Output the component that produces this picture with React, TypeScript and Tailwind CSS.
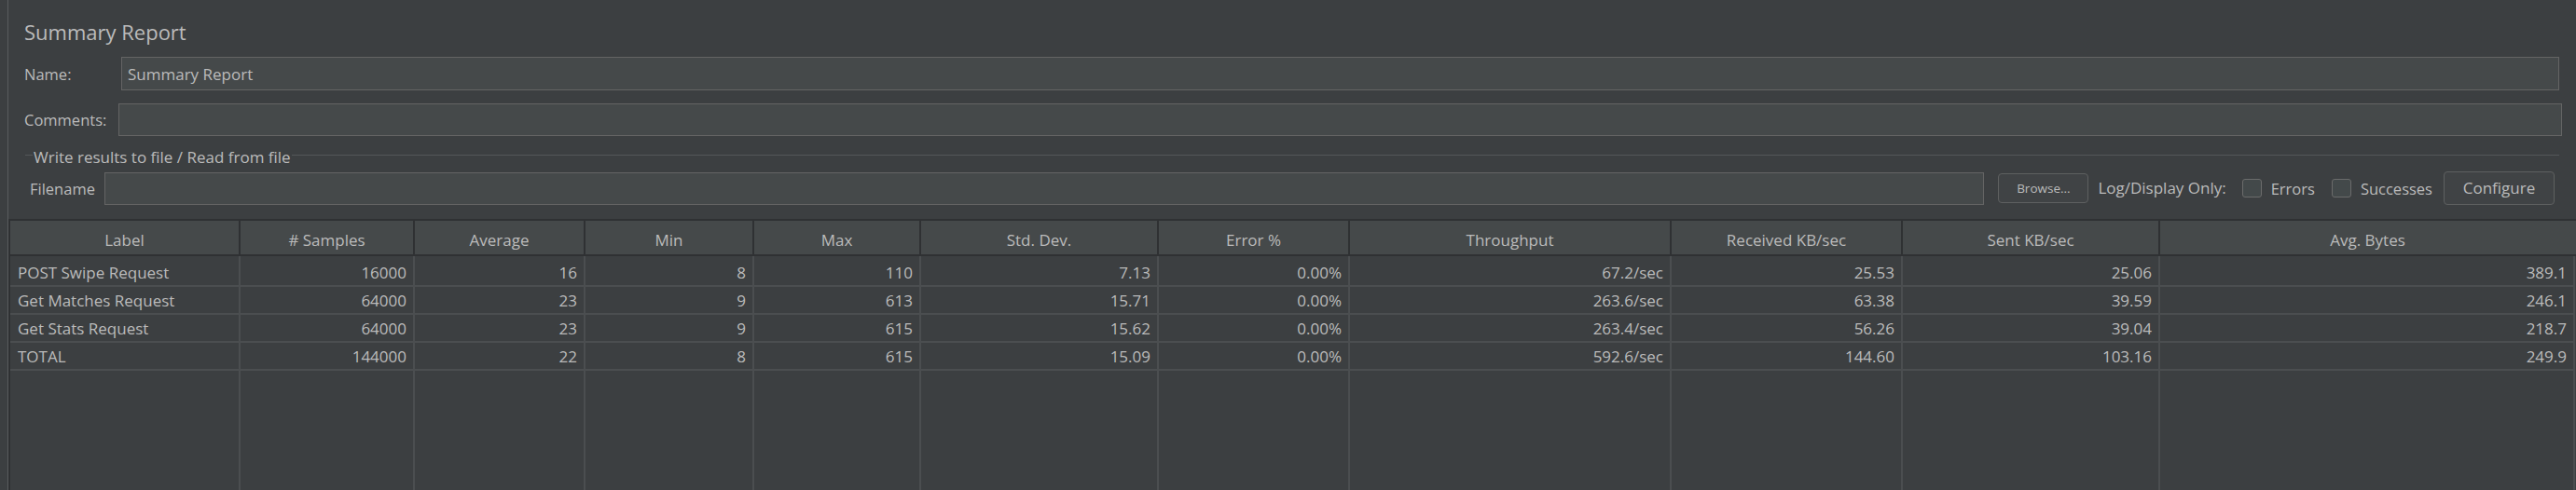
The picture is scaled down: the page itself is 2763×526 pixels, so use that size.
import React from 'react';

type Row = string[];

const columns = [
  'Label',
  '# Samples',
  'Average',
  'Min',
  'Max',
  'Std. Dev.',
  'Error %',
  'Throughput',
  'Received KB/sec',
  'Sent KB/sec',
  'Avg. Bytes',
];

const rows: Row[] = [
  ['POST Swipe Request', '16000', '16', '8', '110', '7.13', '0.00%', '67.2/sec', '25.53', '25.06', '389.1'],
  ['Get Matches Request', '64000', '23', '9', '613', '15.71', '0.00%', '263.6/sec', '63.38', '39.59', '246.1'],
  ['Get Stats Request', '64000', '23', '9', '615', '15.62', '0.00%', '263.4/sec', '56.26', '39.04', '218.7'],
  ['TOTAL', '144000', '22', '8', '615', '15.09', '0.00%', '592.6/sec', '144.60', '103.16', '249.9'],
];

// column widths measured from the screenshot
const gridCols =
  'grid grid-cols-[247px_187px_183px_181px_179px_255px_205px_345px_248px_276px_445px]';

const Checkbox = ({ label }: { label: string }) => (
  <div className="flex items-center">
    <div className="w-[21px] h-[20px] rounded-[3px] border border-[#6b6b6b] bg-[#43494a]" />
    <span className="ml-[10px] pt-[2px]">{label}</span>
  </div>
);

const App = () => {
  return (
    <div className="w-[2763px] h-[526px] bg-[#3c3f41] flex overflow-hidden text-[#bbbbbb] text-[16.5px] font-['Open_Sans',sans-serif]">
      <div className="w-[8px] shrink-0" />
      <div className="w-px shrink-0 bg-[#595c5e]" />

      <div className="flex-1 flex flex-col min-w-0">
        {/* form */}
        <div className="pl-[17px] pr-[18px]">
          <div className="pt-[19px] h-[61px]">
            <div className="text-[22px] leading-[30px] h-[30px]">Summary Report</div>
          </div>

          <div className="flex items-center h-[36px]">
            <span className="w-[104px] shrink-0 pt-[2px]">Name:</span>
            <div className="flex-1 h-full bg-[#45494a] border border-[#646464] flex items-center pl-[6px] pt-[2px] text-[17px]">
              Summary Report
            </div>
          </div>

          <div className="flex items-center h-[35px] mt-[14px]">
            <span className="w-[101px] shrink-0 pt-[2px]">Comments:</span>
            <div className="flex-1 h-full bg-[#45494a] border border-[#646464] mr-[-3px]" />
          </div>

          {/* titled border */}
          <div className="flex h-[24px] mt-[10px] ml-[1px]">
            <div className="w-[8px] h-px bg-[#545759] mt-[10px]" />
            <span className="leading-[24px] px-[1px] pt-[1px] text-[17px]">Write results to file / Read from file</span>
            <div className="flex-1 h-px bg-[#545759] mt-[10px]" />
          </div>

          <div className="flex items-center h-[36px] mt-[4px] pl-[6px]">
            <span className="w-[80px] shrink-0 pt-[3px]">Filename</span>
            <div className="flex-1 h-[35px] bg-[#45494a] border border-[#646464]" />
            <button className="ml-[15px] w-[97px] h-[32px] rounded-[4px] border border-[#5e6060] bg-[#404345] text-[13.5px] text-[#bbbbbb]">
              Browse...
            </button>
            <span className="ml-[10px] text-[17px]">Log/Display Only:</span>
            <div className="ml-[17px]">
              <Checkbox label="Errors" />
            </div>
            <div className="ml-[18px]">
              <Checkbox label="Successes" />
            </div>
            <button className="ml-[12px] mr-[5px] w-[119px] h-[36px] rounded-[4px] border border-[#5e6060] bg-[#404345] text-[17px] text-[#bbbbbb]">
              Configure
            </button>
          </div>
        </div>

        {/* results table */}
        <div className="mt-[15px] flex-1 flex flex-col border-l-2 border-t-2 border-[#2f3133] text-[17px]">
          <div className={`${gridCols} h-[38px] bg-[#45494a] border-b-2 border-[#2f3133]`}>
            {columns.map((c) => (
              <div key={c} className="flex items-center justify-center pt-[6px] border-r-2 border-[#2f3133] last:border-r-0">
                {c}
              </div>
            ))}
          </div>

          {rows.map((r) => (
            <div key={r[0]} className={`${gridCols} h-[30px]`}>
              {r.map((v, i) => (
                <div
                  key={i}
                  className={`flex items-center border-r-2 border-b-2 border-[#4b4e50] pt-[5px] ${
                    i === 0 ? 'pl-[8px]' : 'justify-end pr-[7px]'
                  }`}
                >
                  {v}
                </div>
              ))}
            </div>
          ))}

          <div className={`${gridCols} flex-1`}>
            {columns.map((c) => (
              <div key={c} className="border-r-2 border-[#4b4e50]" />
            ))}
          </div>
        </div>
      </div>
    </div>
  );
};

export default App;
